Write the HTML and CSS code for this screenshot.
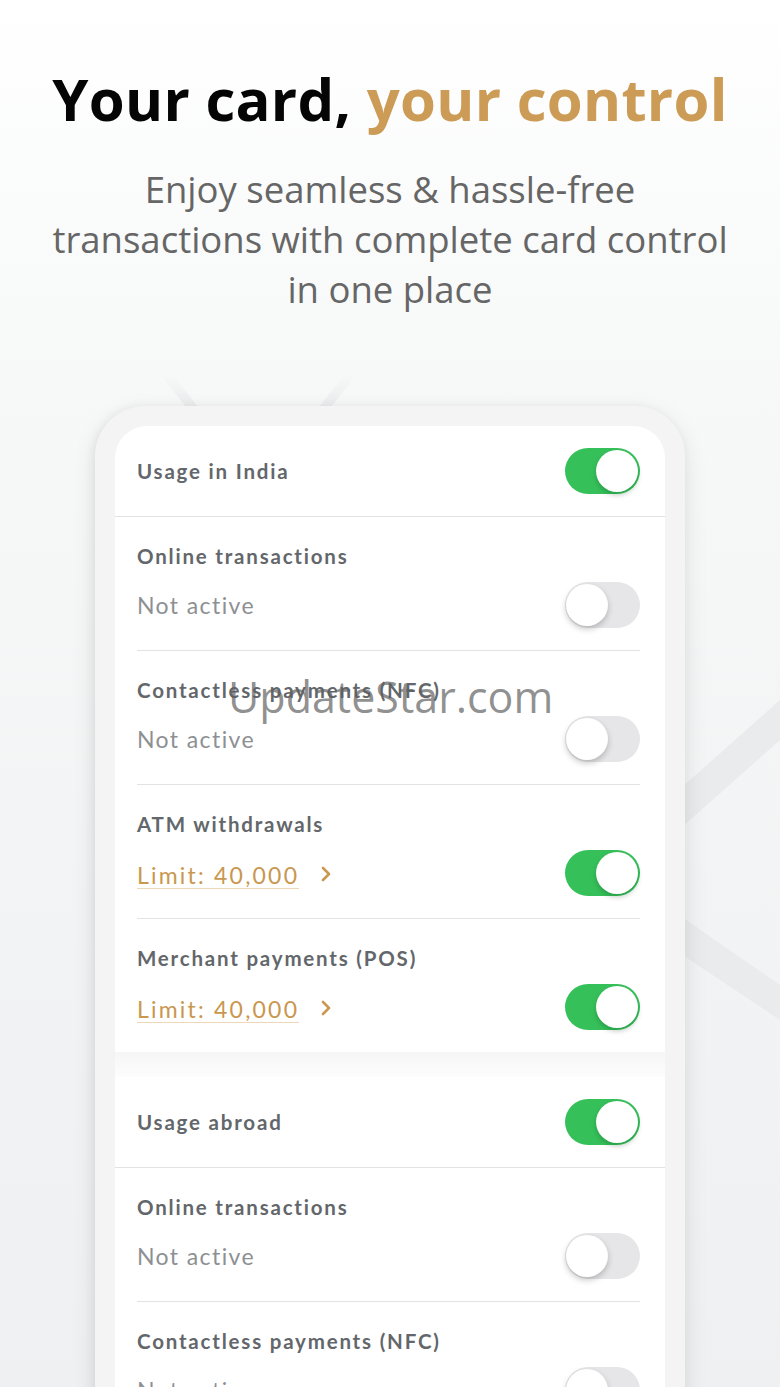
FILE: index.html
```html
<!DOCTYPE html>
<html lang="en">
<head>
    <meta charset="UTF-8">
    <meta name="viewport" content="width=device-width, initial-scale=1.0">
    <title>Card control</title>
    <link rel="stylesheet" href="styles.css">
</head>
<body>
    <div class="page">
        <svg class="backdrop" width="780" height="1387" viewBox="0 0 780 1387">
            <defs>
                <linearGradient id="fadeDown" x1="0" y1="0" x2="0" y2="1">
                    <stop offset="0" stop-color="#e9ebec" stop-opacity="0"/>
                    <stop offset="1" stop-color="#e9ebec" stop-opacity="1"/>
                </linearGradient>
            </defs>
            <polygon points="160,374 172,374 202,412 190,412" fill="url(#fadeDown)"/>
            <polygon points="345,374 357,374 327,412 315,412" fill="url(#fadeDown)"/>
            <polygon points="600,860 780,700 780,740 600,900" fill="#e9ebec"/>
            <polygon points="600,860 600,900 780,1020 780,985" fill="#e9ebec"/>
        </svg>

        <header class="intro">
            <h1>Your card, <span class="gold">your control</span></h1>
            <p>Enjoy seamless &amp; hassle-free<br>transactions with complete card control<br>in one place</p>
        </header>

        <div class="phone">
            <div class="screen">
                <section class="group">
                    <div class="group-head">
                        <span class="group-title">Usage in India</span>
                        <span class="toggle on"></span>
                    </div>
                    <div class="items">
                        <div class="item">
                            <div class="item-title">Online transactions</div>
                            <div class="item-line">
                                <span class="status">Not active</span>
                                <span class="toggle"></span>
                            </div>
                        </div>
                        <div class="item">
                            <div class="item-title">Contactless payments (NFC)</div>
                            <div class="item-line">
                                <span class="status">Not active</span>
                                <span class="toggle"></span>
                            </div>
                        </div>
                        <div class="item">
                            <div class="item-title">ATM withdrawals</div>
                            <div class="item-line">
                                <a class="limit" href="#">
                                    <span class="limit-text">Limit: 40,000</span>
                                    <svg class="chevron" width="10" height="16" viewBox="0 0 10 16"><polyline points="2,2 8,8 2,14" fill="none" stroke="#c9974f" stroke-width="2.6" stroke-linecap="round" stroke-linejoin="round"/></svg>
                                </a>
                                <span class="toggle on"></span>
                            </div>
                        </div>
                        <div class="item">
                            <div class="item-title">Merchant payments (POS)</div>
                            <div class="item-line">
                                <a class="limit" href="#">
                                    <span class="limit-text">Limit: 40,000</span>
                                    <svg class="chevron" width="10" height="16" viewBox="0 0 10 16"><polyline points="2,2 8,8 2,14" fill="none" stroke="#c9974f" stroke-width="2.6" stroke-linecap="round" stroke-linejoin="round"/></svg>
                                </a>
                                <span class="toggle on"></span>
                            </div>
                        </div>
                    </div>
                </section>

                <div class="group-gap"></div>

                <section class="group">
                    <div class="group-head">
                        <span class="group-title">Usage abroad</span>
                        <span class="toggle on"></span>
                    </div>
                    <div class="items">
                        <div class="item">
                            <div class="item-title">Online transactions</div>
                            <div class="item-line">
                                <span class="status">Not active</span>
                                <span class="toggle"></span>
                            </div>
                        </div>
                        <div class="item">
                            <div class="item-title">Contactless payments (NFC)</div>
                            <div class="item-line">
                                <span class="status">Not active</span>
                                <span class="toggle"></span>
                            </div>
                        </div>
                    </div>
                </section>
            </div>
        </div>

        <div class="watermark">UpdateStar.com</div>
    </div>
</body>
</html>
```

FILE: styles.css
```css
* {
    margin: 0;
    padding: 0;
    box-sizing: border-box;
}

body {
    width: 780px;
    height: 1387px;
    overflow: hidden;
    font-family: "Open Sans", sans-serif;
    background: linear-gradient(to bottom, #ffffff 0, #f7f8f8 380px, #eef0f1 1387px);
}

.page {
    position: relative;
    width: 780px;
    height: 1387px;
    overflow: hidden;
}

.backdrop {
    position: absolute;
    top: 0;
    left: 0;
}

.intro {
    position: relative;
    text-align: center;
    padding-top: 65px;
}

.intro h1 {
    font-size: 58px;
    font-weight: 700;
    line-height: 68px;
    color: #050505;
    letter-spacing: 0.3px;
}

.gold {
    color: #cc9b56;
}

.intro p {
    margin-top: 31px;
    font-size: 36.5px;
    line-height: 50px;
    color: #666666;
}

.phone {
    position: relative;
    width: 590px;
    height: 1100px;
    margin: 92px auto 0 95px;
    padding: 20px;
    background: #f4f4f4;
    border-radius: 50px;
    box-shadow: 0 8px 24px rgba(0, 0, 0, 0.10), -2px 0 10px rgba(0, 0, 0, 0.05);
}

.screen {
    background: #ffffff;
    border-radius: 32px 32px 0 0;
    height: 100%;
    font-family: Lato, sans-serif;
}

.group-head {
    display: flex;
    align-items: center;
    justify-content: space-between;
    height: 91px;
    padding: 0 25px 0 22px;
    border-bottom: 1px solid #e3e3e3;
}

.group-title,
.item-title {
    font-size: 20.5px;
    font-weight: 700;
    color: #63676b;
    letter-spacing: 1.8px;
}

.items {
    padding: 0 25px 0 22px;
}

.item {
    padding: 28px 0 22px;
    border-bottom: 1px solid #e3e3e3;
}

.item:last-child {
    border-bottom: none;
}

.item-title {
    line-height: 22px;
}

.item-line {
    display: flex;
    align-items: center;
    justify-content: space-between;
    margin-top: 15px;
    height: 46px;
}

.status {
    font-size: 23px;
    color: #8d9093;
    letter-spacing: 1.4px;
}

.limit {
    display: flex;
    align-items: center;
    gap: 22px;
    text-decoration: none;
}

.limit-text {
    font-size: 23px;
    color: #c9974f;
    letter-spacing: 2.2px;
    border-bottom: 1px solid #ecd8b8;
    line-height: 26px;
    margin-top: 4px;
}

.chevron {
    margin-top: 2px;
}

.group-gap {
    height: 25px;
    background: linear-gradient(to bottom, #f6f6f6, #fdfdfd);
}

.toggle {
    position: relative;
    width: 75px;
    height: 46px;
    border-radius: 23px;
    background: #e6e6e8;
    flex-shrink: 0;
}

.toggle::after {
    content: "";
    position: absolute;
    top: 2px;
    left: 1px;
    width: 42px;
    height: 42px;
    border-radius: 50%;
    background: #ffffff;
    box-shadow: 0 3px 6px rgba(0, 0, 0, 0.22);
}

.toggle.on {
    background: #36c05a;
}

.toggle.on::after {
    left: 31px;
    box-shadow: 0 3px 5px rgba(0, 60, 20, 0.25);
}

.watermark {
    position: absolute;
    top: 667px;
    left: 228px;
    font-family: "Open Sans", sans-serif;
    font-size: 43px;
    line-height: 60px;
    color: rgba(95, 95, 95, 0.7);
}
```
